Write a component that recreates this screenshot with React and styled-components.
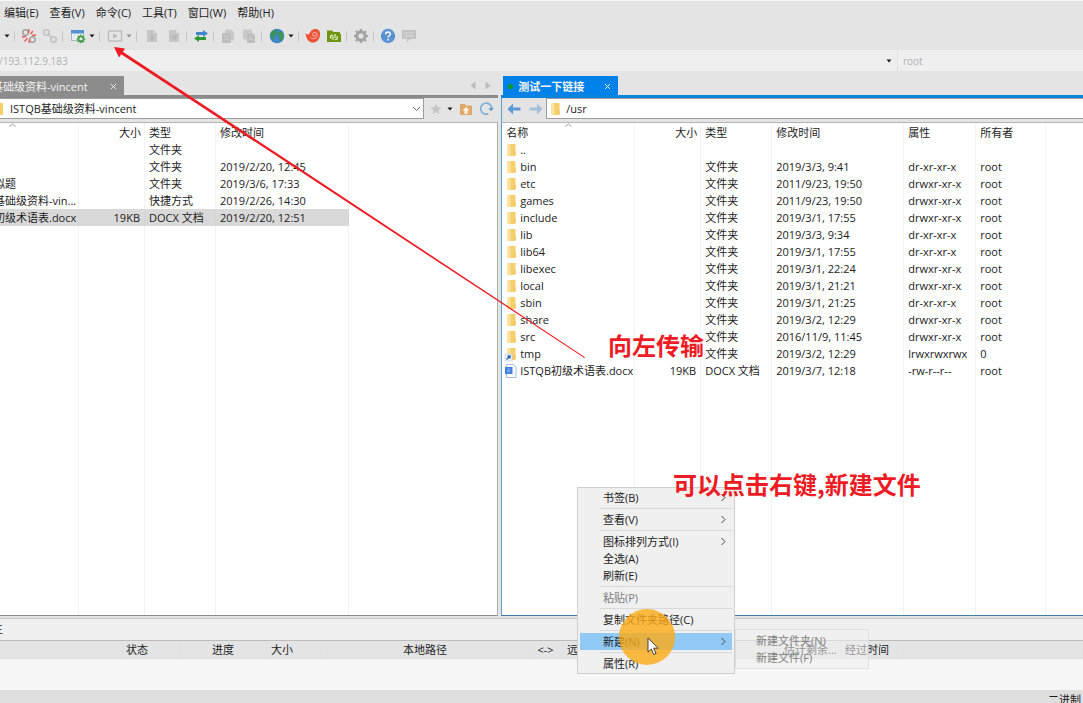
import React, { useState } from 'react';
import styled, { createGlobalStyle, css } from 'styled-components';

const GlobalStyle = createGlobalStyle`
  * {
    box-sizing: border-box;
  }

  body {
    margin: 0;
    background: #e4e4e4;
    color: #1c1c1c;
    font-family: 'Open Sans', 'Noto Sans CJK SC', sans-serif;
    font-size: 11px;
    line-height: 17px;
  }

  button, input, select {
    font: inherit;
    color: inherit;
    margin: 0;
    padding: 0;
    border: 0;
    border-radius: 0;
    background: none;
    outline: none;
  }
`;

const Page = styled.div`
  position: relative;
  display: flex;
  flex-direction: column;
  min-height: 100vh;
  overflow: hidden;
  border-top: 1px solid #f6f6f6;
`;

const MenuBar = styled.nav`
  display: flex;
  gap: 11px;
  height: 24px;
  padding: 2px 4px 4px;

  button {
    white-space: nowrap;
  }
`;

const ToolBar = styled.div`
  display: flex;
  align-items: center;
  height: 25px;
  padding: 0 0 3px 4px;
`;

const ToolButton = styled.button`
  display: flex;
  align-items: center;
  justify-content: center;
  flex: none;
  width: ${props => (props.$wide ? 23 : 21)}px;
  height: 18px;
`;

const CaretButton = styled.button`
  display: flex;
  align-items: center;
  flex: none;
  width: 8px;
  height: 18px;
`;

const Divider = styled.span`
  flex: none;
  width: 1px;
  height: 11px;
  margin: 0 3px 0 2px;
  background: #c6c6c6;
`;

const AddressBar = styled.div`
  display: flex;
  height: 21px;
  background: #efefef;
  color: #b0b0b0;
  font-size: 10px;

  input {
    min-width: 0;
    height: 21px;
  }
`;

const HostField = styled.div`
  display: flex;
  flex: 1;
  align-items: center;
  padding-right: 5px;

  input {
    flex: 1;
    text-indent: -1px;
  }
`;

const UserField = styled.div`
  display: flex;
  width: 186px;
  padding-left: 5px;
  border-left: 1px solid #dedede;
`;

const Panes = styled.main`
  display: flex;
  flex: 1;
`;

const Pane = styled.section`
  display: flex;
  flex-direction: column;
  min-width: 0;
  flex: ${props => (props.$remote ? '1' : '0 0 46%')};
  margin-left: ${props => (props.$remote ? 3 : 0)}px;
`;

const TabStrip = styled.div`
  display: flex;
  align-items: flex-end;
  height: 27px;
  padding-left: ${props => (props.$remote ? 2 : 0)}px;
  border-bottom: 3px solid ${props => (props.$remote ? '#0a84dc' : '#8c8c8c')};
`;

const Tab = styled.div`
  display: flex;
  align-items: center;
  justify-content: space-between;
  width: ${props => (props.$remote ? 115 : 124)}px;
  height: 19px;
  padding-top: 2px;
  padding-right: 6px;
  padding-left: ${props => (props.$remote ? 5 : 0)}px;
  overflow: hidden;
  white-space: nowrap;
  background: ${props => (props.$remote ? '#0082ea' : '#8c8c8c')};
  color: #f4f4f4;

  .title {
    text-indent: ${props => (props.$remote ? 0 : -8)}px;
    font-weight: ${props => (props.$remote ? 700 : 400)};
  }

  .dot {
    width: 5px;
    height: 5px;
    margin-right: 5px;
    border-radius: 50%;
    background: #0b9a1c;
  }

  button {
    display: flex;
    margin-left: auto;
    padding: 1px;
  }
`;

const TabArrows = styled.div`
  display: flex;
  gap: 9px;
  margin-left: auto;
  padding: 0 7px 5px 0;

  button {
    display: flex;
  }
`;

const PathRow = styled.div`
  display: flex;
  align-items: center;
  height: 24px;
  padding-bottom: 3px;
  ${props =>
    props.$remote &&
    css`
      border-left: 1px solid #5aa0d0;
    `}
`;

const PathBox = styled.div`
  display: flex;
  align-items: center;
  flex: 1;
  min-width: 0;
  height: 21px;
  padding: 0 2px 0 ${props => (props.$remote ? 4 : 0)}px;
  background: #fff;
  border: 1px solid #9c9c9c;
  border-left-width: ${props => (props.$remote ? 1 : 0)}px;
  border-right-width: ${props => (props.$remote ? 0 : 1)}px;

  select {
    flex: 1;
    min-width: 0;
    height: 19px;
    padding-left: 6px;
    appearance: none;
    line-height: 19px;
  }
`;

const PathTools = styled.div`
  display: flex;
  align-items: center;
  width: ${props => (props.$remote ? 44 : 74)}px;
`;

const ListBox = styled.div`
  display: flex;
  flex: 1;
  background: #fff;
  border-top: 1px solid #b4b4b4;
  border-bottom: 1px solid ${props => (props.$remote ? '#3d7ea8' : '#8c8c8c')};
  ${props =>
    props.$remote
      ? css`
          border-left: 1px solid #5aa0d0;
        `
      : css`
          border-right: 1px solid #b0b0b0;
        `}
`;

const FileTable = styled.table`
  width: 100%;
  table-layout: fixed;
  border-collapse: separate;
  border-spacing: 0;

  th, td {
    height: 17px;
    padding: 0 4px;
    overflow: hidden;
    white-space: nowrap;
    font-weight: 400;
    text-align: left;
    border-right: 1px solid #f1f4f6;
  }

  th {
    position: relative;
    height: 18px;
  }

  td:first-child {
    padding: 0 0 0 5px;
  }

  th:last-child, td:last-child {
    border-right: 0;
  }

  .size {
    text-align: right;
  }

  th.size {
    padding-right: 3px;
  }

  .filler td {
    height: auto;
  }
`;

const FileRow = styled.tr`
  ${props =>
    props.$selected &&
    css`
      td:not(:last-child) {
        background: #d9d9d9;
        border-right-color: #d3d5d7;
      }
    `}
`;

const FileName = styled.span`
  display: flex;
  align-items: center;
  gap: ${props => (props.$clipped ? 0 : 4)}px;
  margin-left: ${props => (props.$clipped ? -11 : 0)}px;
`;

const SortMark = styled.svg`
  position: absolute;
  top: 0;
  left: ${props => (props.$clipped ? '9px' : 'calc(50% - 3px)')};
`;

const QueueTitle = styled.div`
  height: 23px;
  margin-top: 2px;
  overflow: hidden;
  background: #efefef;
  border-top: 1px solid #c4c4c4;
  border-bottom: 1px solid #bcbcbc;
  text-indent: -8px;
  line-height: 20px;
`;

const QueueTable = styled.table`
  width: 100%;
  table-layout: fixed;
  border-collapse: separate;
  border-spacing: 0;
  background: #e4e4e4;

  th {
    height: 18px;
    padding: 1px 4px 0;
    overflow: hidden;
    white-space: nowrap;
    font-weight: 400;
    line-height: 16px;
    text-align: left;
    border-right: 1px solid #dfe1e4;
    border-bottom: 1px solid #dcdcdc;
  }

  .center {
    text-align: center;
  }
`;

const QueueBody = styled.div`
  height: 31px;
  background: #f7f7f7;
`;

const StatusBar = styled.footer`
  height: 13px;
  padding-right: 2px;
  overflow: hidden;
  background: #dedede;
  text-align: right;
  line-height: 19px;
`;

const ContextMenu = styled.div`
  position: absolute;
  top: 486px;
  left: 577px;
  width: 158px;
  padding: 1px 2px;
  background: #f0f0f0;
  border: 1px solid #cfcfcf;

  hr {
    height: 1px;
    margin: 2px 0 2px 20px;
    border: 0;
    background: #d9d9d9;
  }
`;

const MenuItem = styled.button`
  display: flex;
  align-items: center;
  justify-content: space-between;
  width: 100%;
  height: 17px;
  padding: 0 6px 0 23px;
  background: ${props => (props.$active ? '#91c9f7' : 'transparent')};
  color: ${props => (props.disabled ? '#7d7d7d' : 'inherit')};
`;

const SubMenu = styled.div`
  position: absolute;
  top: 628px;
  left: 735px;
  width: 134px;
  padding: 2px 0;
  background: rgba(240, 240, 240, 0.55);
  border: 1px solid rgba(210, 210, 210, 0.6);

  button {
    display: block;
    padding-left: 20px;
    color: #808080;
  }
`;

const ClickSpot = styled.div`
  position: absolute;
  top: 608px;
  left: 619px;
  width: 56px;
  height: 56px;
  border-radius: 50%;
  background: rgba(251, 170, 20, 0.8);
`;

const Pointer = styled.svg`
  position: absolute;
  top: 28px;
  left: 28px;
`;

const Note = styled.div`
  position: absolute;
  top: ${props => props.$top}px;
  left: ${props => props.$left}px;
  color: #ed1c24;
  font-family: 'Noto Sans CJK SC', sans-serif;
  font-size: 24px;
  font-weight: 700;
  line-height: 32px;
  white-space: nowrap;
`;

const ArrowLayer = styled.svg`
  position: absolute;
  top: -1px;
  left: 0;
  pointer-events: none;
`;

/* ---- icons ---- */

const Caret = ({ color = '#1a1a1a' }) => (
  <svg width="6" height="4" viewBox="0 0 6 4">
    <path d="M0.5 0.5h5L3 3.5z" fill={color} />
  </svg>
);

const FolderIcon = ({ link }) => (
  <svg width="9" height="14" viewBox="0 0 9 14" style={{ overflow: 'visible', flex: 'none' }}>
    <path d="M0.5 1.5h2l1-0.5h5v11l-1.5 1h-6.5z" fill="#f6ce6b" />
    <path d="M0.5 1.5l3 1v11l-3-1.5z" fill="#fce4a0" />
    <path d="M7.5 8h1v4.5h-1z" fill="#edb94c" />
    {link && (
      <g>
        <rect x="-2" y="7" width="7" height="7" fill="#f4f8fc" stroke="#b9c8d8" strokeWidth="0.6" />
        <path d="M-0.5 12.5l3.5-3.5M0.5 9h2.5v2.5" stroke="#1f5fae" strokeWidth="1.3" fill="none" />
      </g>
    )}
  </svg>
);

const DocIcon = () => (
  <svg width="9" height="14" viewBox="0 0 9 14" style={{ overflow: 'visible', flex: 'none' }}>
    <path d="M-0.5 0.5h7l2.5 2.5v10.500h-9.500z" fill="#fff" stroke="#a9bfdc" />
    <rect x="-2" y="3" width="7.500" height="7" fill="#3f7fe0" />
    <path d="M0 5h3.500M0 6.500h3.500M0 8h3.500" stroke="#9cc0f4" strokeWidth="0.700" fill="none" />
  </svg>
);

const LinkIcon = ({ broken }) => (
  <svg width="16" height="16" viewBox="0 0 16 16" fill="none">
    <g stroke={broken ? '#a4a4a4' : '#c2c2c2'} strokeWidth="1.6">
      <circle cx="4.500" cy="4.500" r="2.700" />
      <circle cx="11.500" cy="11.500" r="2.700" />
      {!broken && <path d="M6.500 6.500l3 3" />}
    </g>
    {broken && (
      <path
        d="M8 1l-0.500 4M12 3L9.500 6M15 7l-4 0.500M1 9l4-0.500M3.500 13.500L6.500 10M8 15l0.500-4"
        stroke="#ea5a5a"
        strokeWidth="1.4"
      />
    )}
  </svg>
);

const gearPath =
  'M7 1h2l0.400 1.800 1.500 0.600L12.500 2.400l1.300 1.300-1 1.500 0.700 1.500L15 7v2l-1.700 0.400-0.600 1.500 1 1.600-1.400 1.300-1.500-1-1.500 0.700L9 15H7l-0.400-1.600-1.500-0.600-1.600 1-1.300-1.400 1-1.500L2.600 9.400 1 9V7l1.700-0.400 0.600-1.500-1-1.600 1.400-1.300 1.500 1 1.400-0.600zM8 5.400a2.600 2.600 0 1 0 0 5.200 2.600 2.600 0 0 0 0-5.200z';

const WindowGearIcon = () => (
  <svg width="16" height="16" viewBox="0 0 16 16">
    <rect x="1.500" y="2.500" width="12" height="10" fill="#e9eef2" stroke="#a9b4bd" />
    <rect x="1" y="2" width="13" height="3.500" fill="#4f93d0" />
    <g transform="translate(6 6) scale(0.620)">
      <path d={gearPath} fill="#43a047" fillRule="evenodd" />
    </g>
  </svg>
);

const PlayIcon = () => (
  <svg width="16" height="16" viewBox="0 0 16 16">
    <rect x="1.500" y="3" width="13" height="10" fill="none" stroke="#bdbdbd" strokeWidth="1.400" />
    <path d="M6 5.500l5 2.500-5 2.500z" fill="#bdbdbd" />
  </svg>
);

const FileIcon = ({ left }) => (
  <svg width="14" height="16" viewBox="0 0 14 16">
    <path d="M2 2h7l3 3v9H2z" fill="#c6c6c6" />
    <path d="M9 2v3h3z" fill="#dedede" />
    <path d={left ? 'M7 6v5M4.500 9L7 11.500 9.500 9' : 'M4 9h5M7 6.500L9.500 9 7 11.500'} stroke="#adadad" fill="none" />
  </svg>
);

const CopyIcon = ({ flip }) => (
  <svg width="16" height="16" viewBox="0 0 16 16">
    <path d={flip ? 'M2 1.500h9v10H2z' : 'M5 1.500h6l3 3v8H5z'} fill="#cacaca" />
    <path d={flip ? 'M6 5.500h6l2 2V15H6z' : 'M2 5h7l2 2v8H2z'} fill="#bebebe" />
    <path d={flip ? 'M8 9h4M8 11.500h4' : 'M4 9h5M4 11.500h5'} stroke="#cacaca" />
  </svg>
);

const TransferIcon = () => (
  <svg width="16" height="16" viewBox="0 0 16 16">
    <path d="M3 4h7V2l5 3.500L10 9V7H3z" fill="#4287cb" />
    <path d="M13 9H6V7l-5 3.500L6 14v-2h7z" fill="#2f9a35" />
  </svg>
);

const GlobeIcon = () => (
  <svg width="16" height="16" viewBox="0 0 16 16">
    <circle cx="8" cy="8" r="7.300" fill="#3f86cf" />
    <path d="M3 3.500l3.500-2 2 0.500-1 2 1.500 1-2 2-2.500 0.500 1 2-1 3-2-2.500-1.500-3.500zM10 4l3-0.500 1.800 3-0.500 3.500-2.300 3-2-0.500 0.500-3-1.500-2z" fill="#3c9455" />
  </svg>
);

const SwirlIcon = () => (
  <svg width="16" height="16" viewBox="0 0 16 16" fill="none">
    <path d="M0.500 5c2 2.500 3.500 1.500 4.500-0.500C6.500 1.500 9 0.800 11 1c3 0.500 4.500 3 4 6-0.500 5-4 8-8 7.500C3.500 14 1 10.500 0.500 5z" fill="#ee5135" />
    <path d="M5.500 9.500c1.500 2 6 1.500 6.700-1.800 0.500-2.500-1.700-4-3.400-3.200-1.800 0.900-1.600 3.400 0 3.600 1.200 0.100 1.700-0.900 1.300-1.600" stroke="#f8c4b8" strokeWidth="1" />
  </svg>
);

const GreenFolderIcon = () => (
  <svg width="16" height="16" viewBox="0 0 16 16" fill="none">
    <path d="M1 2.500h5l1.500 1.500H14v2h1v8H1z" fill="#6f9410" />
    <path d="M7 12V8.500M7 7.500c-2.500-1-3.500 2-1.500 3M9 6v4M9 11.500c2.500 0.500 3.300-2.500 1.300-3.300" stroke="#eef5d8" strokeWidth="1.200" />
  </svg>
);

const GearIcon = () => (
  <svg width="16" height="16" viewBox="0 0 16 16">
    <path d={gearPath} fill="#a3a3a3" fillRule="evenodd" />
  </svg>
);

const HelpIcon = () => (
  <svg width="16" height="16" viewBox="0 0 16 16" fill="none">
    <circle cx="8" cy="8" r="7.200" fill="#5b93d2" />
    <path d="M5.700 6.300c0-3.200 4.800-3 4.600-0.200C10.200 7.700 8 7.800 8 9.500M8 10.800v1.600" stroke="#fff" strokeWidth="1.500" />
  </svg>
);

const ChatIcon = () => (
  <svg width="16" height="16" viewBox="0 0 16 16">
    <path d="M1 2h14v9H9l-3 3.500V11H1z" fill="#c3c3c3" />
    <path d="M3.500 5h9M3.500 8h9" stroke="#dcdcdc" />
  </svg>
);

const Cross = () => (
  <svg width="7" height="7" viewBox="0 0 7 7">
    <path d="M1 1l5 5M6 1L1 6" stroke="#e8eef4" strokeWidth="1" />
  </svg>
);

const Chevron = () => (
  <svg width="5" height="9" viewBox="0 0 5 9">
    <path d="M0.500 1l3.500 3.500-3.500 3.500" stroke="#444" fill="none" />
  </svg>
);

const ArrowIcon = ({ forward }) => (
  <svg width="14" height="12" viewBox="0 0 14 12">
    <path
      d={forward ? 'M13.500 6L8 0.500v4H0.500v3H8v4z' : 'M0.500 6L6 0.500v4h7.500v3H6v4z'}
      fill={forward ? '#a3bfdc' : '#5b9bd5'}
    />
  </svg>
);

/* ---- data ---- */

const menus = ['编辑(E)', '查看(V)', '命令(C)', '工具(T)', '窗口(W)', '帮助(H)'];

const localFiles = [
  { name: '', size: '', type: '文件夹', date: '' },
  { name: '', size: '', type: '文件夹', date: '2019/2/20, 12:45' },
  { name: '拟题', size: '', type: '文件夹', date: '2019/3/6, 17:33' },
  { name: '基础级资料-vin...', size: '', type: '快捷方式', date: '2019/2/26, 14:30' },
  { name: '初级术语表.docx', size: '19KB', type: 'DOCX 文档', date: '2019/2/20, 12:51' },
];

const remoteFiles = [
  { name: '..', type: '', date: '', mode: '', owner: '' },
  { name: 'bin', type: '文件夹', date: '2019/3/3, 9:41', mode: 'dr-xr-xr-x', owner: 'root' },
  { name: 'etc', type: '文件夹', date: '2011/9/23, 19:50', mode: 'drwxr-xr-x', owner: 'root' },
  { name: 'games', type: '文件夹', date: '2011/9/23, 19:50', mode: 'drwxr-xr-x', owner: 'root' },
  { name: 'include', type: '文件夹', date: '2019/3/1, 17:55', mode: 'drwxr-xr-x', owner: 'root' },
  { name: 'lib', type: '文件夹', date: '2019/3/3, 9:34', mode: 'dr-xr-xr-x', owner: 'root' },
  { name: 'lib64', type: '文件夹', date: '2019/3/1, 17:55', mode: 'dr-xr-xr-x', owner: 'root' },
  { name: 'libexec', type: '文件夹', date: '2019/3/1, 22:24', mode: 'drwxr-xr-x', owner: 'root' },
  { name: 'local', type: '文件夹', date: '2019/3/1, 21:21', mode: 'drwxr-xr-x', owner: 'root' },
  { name: 'sbin', type: '文件夹', date: '2019/3/1, 21:25', mode: 'dr-xr-xr-x', owner: 'root' },
  { name: 'share', type: '文件夹', date: '2019/3/2, 12:29', mode: 'drwxr-xr-x', owner: 'root' },
  { name: 'src', type: '文件夹', date: '2016/11/9, 11:45', mode: 'drwxr-xr-x', owner: 'root' },
  { name: 'tmp', type: '文件夹', date: '2019/3/2, 12:29', mode: 'lrwxrwxrwx', owner: '0', link: true },
  { name: 'ISTQB初级术语表.docx', size: '19KB', type: 'DOCX 文档', date: '2019/3/7, 12:18', mode: '-rw-r--r--', owner: 'root', doc: true },
];

const contextItems = [
  { label: '书签(B)', sub: true },
  null,
  { label: '查看(V)', sub: true },
  null,
  { label: '图标排列方式(I)', sub: true },
  { label: '全选(A)' },
  { label: '刷新(E)' },
  null,
  { label: '粘贴(P)', disabled: true },
  null,
  { label: '复制文件夹路径(C)' },
  null,
  { label: '新建(N)', sub: true, active: true },
  null,
  { label: '属性(R)' },
];

const Cols = ({ widths }) => (
  <colgroup>
    {widths.map((width, i) => (
      <col key={i} width={width} />
    ))}
    <col />
  </colgroup>
);

const Sort = ({ clipped }) => (
  <SortMark $clipped={clipped} width="7" height="4" viewBox="0 0 7 4">
    <path d="M0.500 3.500L3.500 1l3 2.500" stroke="#999" fill="none" />
  </SortMark>
);

function LocalPane() {
  const [selected, setSelected] = useState(4);

  return (
    <Pane>
      <TabStrip>
        <Tab>
          <span className="title">基础级资料-vincent</span>
          <button aria-label="close"><Cross /></button>
        </Tab>
        <TabArrows>
          <button aria-label="previous tab">
            <svg width="6" height="9" viewBox="0 0 6 9"><path d="M5.500 0.500v8L0.500 4.500z" fill="#bcbcbc" /></svg>
          </button>
          <button aria-label="next tab">
            <svg width="6" height="9" viewBox="0 0 6 9"><path d="M0.500 0.500v8l5-4z" fill="#bcbcbc" /></svg>
          </button>
        </TabArrows>
      </TabStrip>
      <PathRow>
        <PathBox>
          <svg width="4" height="14" viewBox="0 0 4 14"><path d="M0 1h3v12H0z" fill="#f6ce6b" /></svg>
          <select aria-label="local path">
            <option>ISTQB基础级资料-vincent</option>
          </select>
          <svg width="9" height="6" viewBox="0 0 9 6">
            <path d="M1 1l3.500 3.500L8 1" stroke="#666" fill="none" />
          </svg>
        </PathBox>
        <PathTools>
          <ToolButton $wide aria-label="bookmark">
            <svg width="12" height="12" viewBox="0 0 12 12">
              <path d="M6 0.500l1.600 3.700 4 0.300-3 2.700 0.900 4L6 9.100l-3.500 2.100 0.900-4-3-2.700 4-0.300z" fill="#c6c6c6" />
            </svg>
          </ToolButton>
          <CaretButton aria-label="bookmarks"><Caret /></CaretButton>
          <ToolButton aria-label="parent folder">
            <svg width="14" height="14" viewBox="0 0 14 14">
              <path d="M1 2h5l1 1.500h6V13H1z" fill="#dfa96a" />
              <path d="M7 5l3.500 3.500H8.500V12h-3V8.500h-2z" fill="#fff3e4" />
            </svg>
          </ToolButton>
          <ToolButton aria-label="refresh">
            <svg width="15" height="15" viewBox="0 0 15 15">
              <path d="M9.500 12.800a5.600 5.600 0 1 1 3.300-5.500" stroke="#7aaede" strokeWidth="1.600" fill="none" />
              <path d="M9.500 7h5.300l-2.600 3.300z" fill="#5b9bd5" />
            </svg>
          </ToolButton>
        </PathTools>
      </PathRow>
      <ListBox>
        <FileTable>
          <Cols widths={[79, 66, 71, 133]} />
          <thead>
            <tr>
              <th aria-label="name"><Sort clipped /></th>
              <th className="size">大小</th>
              <th>类型</th>
              <th>修改时间</th>
              <th></th>
            </tr>
          </thead>
          <tbody>
            {localFiles.map((file, i) => (
              <FileRow key={i} $selected={selected === i} onClick={() => setSelected(i)}>
                <td><FileName $clipped>{file.name}</FileName></td>
                <td className="size">{file.size}</td>
                <td>{file.type}</td>
                <td>{file.date}</td>
                <td></td>
              </FileRow>
            ))}
            <tr className="filler">
              <td></td><td></td><td></td><td></td><td></td>
            </tr>
          </tbody>
        </FileTable>
      </ListBox>
    </Pane>
  );
}

function RemotePane() {
  return (
    <Pane $remote>
      <TabStrip $remote>
        <Tab $remote>
          <span className="dot" />
          <span className="title">测试一下链接</span>
          <button aria-label="close"><Cross /></button>
        </Tab>
      </TabStrip>
      <PathRow $remote>
        <PathTools $remote>
          <ToolButton $wide aria-label="back"><ArrowIcon /></ToolButton>
          <ToolButton aria-label="forward"><ArrowIcon forward /></ToolButton>
        </PathTools>
        <PathBox $remote>
          <FolderIcon />
          <select aria-label="remote path">
            <option>/usr</option>
          </select>
        </PathBox>
      </PathRow>
      <ListBox $remote>
        <FileTable>
          <Cols widths={[133, 66, 71, 132, 72, 70]} />
          <thead>
            <tr>
              <th>名称<Sort /></th>
              <th className="size">大小</th>
              <th>类型</th>
              <th>修改时间</th>
              <th>属性</th>
              <th>所有者</th>
              <th></th>
            </tr>
          </thead>
          <tbody>
            {remoteFiles.map(file => (
              <FileRow key={file.name}>
                <td>
                  <FileName>
                    {file.doc ? <DocIcon /> : <FolderIcon link={file.link} />}
                    {file.name}
                  </FileName>
                </td>
                <td className="size">{file.size}</td>
                <td>{file.type}</td>
                <td>{file.date}</td>
                <td>{file.mode}</td>
                <td>{file.owner}</td>
                <td></td>
              </FileRow>
            ))}
            <tr className="filler">
              <td></td><td></td><td></td><td></td><td></td><td></td><td></td>
            </tr>
          </tbody>
        </FileTable>
      </ListBox>
    </Pane>
  );
}

export default function App() {
  return (
    <Page>
      <GlobalStyle />
      <MenuBar>
        {menus.map(menu => (
          <button key={menu}>{menu}</button>
        ))}
      </MenuBar>

      <ToolBar>
        <CaretButton aria-label="sessions"><Caret /></CaretButton>
        <Divider />
        <ToolButton aria-label="disconnect"><LinkIcon broken /></ToolButton>
        <ToolButton aria-label="reconnect"><LinkIcon /></ToolButton>
        <Divider />
        <ToolButton $wide aria-label="session properties"><WindowGearIcon /></ToolButton>
        <CaretButton aria-label="session options"><Caret /></CaretButton>
        <Divider />
        <ToolButton $wide aria-label="run"><PlayIcon /></ToolButton>
        <CaretButton aria-label="run options"><Caret color="#8f8f8f" /></CaretButton>
        <Divider />
        <ToolButton $wide aria-label="upload"><FileIcon left /></ToolButton>
        <ToolButton aria-label="download"><FileIcon /></ToolButton>
        <Divider />
        <ToolButton aria-label="transfer"><TransferIcon /></ToolButton>
        <Divider />
        <ToolButton aria-label="copy"><CopyIcon /></ToolButton>
        <ToolButton aria-label="paste"><CopyIcon flip /></ToolButton>
        <Divider />
        <ToolButton $wide aria-label="encoding"><GlobeIcon /></ToolButton>
        <CaretButton aria-label="encodings"><Caret /></CaretButton>
        <Divider />
        <ToolButton aria-label="shell"><SwirlIcon /></ToolButton>
        <ToolButton aria-label="file transfer"><GreenFolderIcon /></ToolButton>
        <Divider />
        <ToolButton aria-label="options"><GearIcon /></ToolButton>
        <Divider />
        <ToolButton aria-label="help"><HelpIcon /></ToolButton>
        <ToolButton aria-label="feedback"><ChatIcon /></ToolButton>
      </ToolBar>

      <AddressBar>
        <HostField>
          <input aria-label="host" defaultValue="/193.112.9.183" />
          <Caret />
        </HostField>
        <UserField>
          <input aria-label="user" defaultValue="root" />
        </UserField>
      </AddressBar>

      <Panes>
        <LocalPane />
        <RemotePane />
      </Panes>

      <QueueTitle>主</QueueTitle>
      <QueueTable>
        <Cols widths={[122, 58, 87, 55, 207, 34, 217, 61, 62]} />
        <thead>
          <tr>
            <th></th>
            <th>状态</th>
            <th className="center">进度</th>
            <th>大小</th>
            <th className="center">本地路径</th>
            <th className="center">&lt;-&gt;</th>
            <th>远</th>
            <th>估计剩余...</th>
            <th>经过时间</th>
            <th></th>
          </tr>
        </thead>
      </QueueTable>
      <QueueBody />
      <StatusBar>二进制</StatusBar>

      <ContextMenu>
        {contextItems.map((item, i) =>
          item ? (
            <MenuItem key={i} $active={item.active} disabled={item.disabled}>
              {item.label}
              {item.sub && <Chevron />}
            </MenuItem>
          ) : (
            <hr key={i} />
          )
        )}
      </ContextMenu>
      <SubMenu>
        <button>新建文件夹(N)</button>
        <button>新建文件(F)</button>
      </SubMenu>
      <ClickSpot>
        <Pointer width="12" height="19" viewBox="0 0 12 19">
          <path d="M1 1v14l3.300-3 2.400 5.500 2.300-1-2.400-5.300h4.400z" fill="#fff" stroke="#333" strokeWidth="0.900" />
        </Pointer>
      </ClickSpot>

      <Note $top={328} $left={608}>向左传输</Note>
      <Note $top={467} $left={673}>可以点击右键,新建文件</Note>
      <ArrowLayer width="600" height="370" viewBox="0 0 600 370">
        <path d="M114 47l11 1.500-2.200 3.200L300 168.500 585 357.200 584.400 358 299 170.500 121.200 54.300 119 57.500z" fill="#ed1c24" />
      </ArrowLayer>
    </Page>
  );
}
